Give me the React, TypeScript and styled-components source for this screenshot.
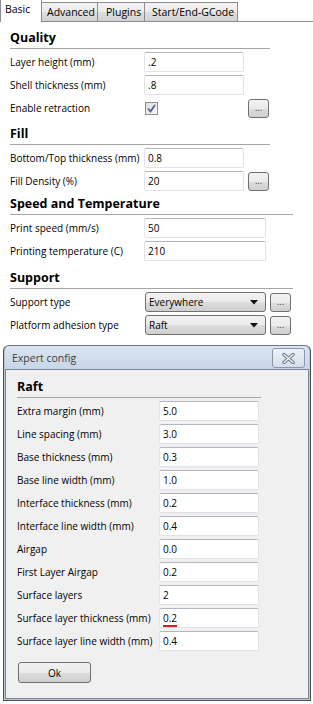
import React from "react";
import styled, { createGlobalStyle } from "styled-components";

const GlobalStyle = createGlobalStyle`
  html, body {
    margin: 0;
    padding: 0;
    background: #fff;
  }
  body {
    font-family: "Open Sans", "Noto Sans", sans-serif;
    font-size: 10px;
    color: #000;
  }
`;

const Page = styled.div`
  position: relative;
  width: 313px;
  height: 704px;
  overflow: hidden;
  background: #fff;
`;

const TabBar = styled.div`
  display: flex;
  align-items: flex-end;
  height: 22px;
  box-sizing: border-box;
  border-bottom: 1px solid #898c95;
`;

const Tab = styled.div<{ $w: number; $pl: number; $active?: boolean }>`
  box-sizing: border-box;
  width: ${(p) => p.$w}px;
  padding-left: ${(p) => p.$pl}px;
  display: flex;
  align-items: center;
  white-space: nowrap;
  font-size: 10.5px;
  border: 1px solid #898c95;
  border-left-width: ${(p) => (p.$active ? 1 : 0)}px;
  border-bottom: none;
  height: ${(p) => (p.$active ? 23 : 19)}px;
  margin-bottom: ${(p) => (p.$active ? -1 : 0)}px;
  padding-bottom: ${(p) => (p.$active ? 4 : 0)}px;
  background: ${(p) =>
    p.$active
      ? "#fff"
      : "linear-gradient(#f3f3f3 0%, #ebebeb 50%, #dedede 51%, #d2d2d2 100%)"};
  position: relative;
  z-index: ${(p) => (p.$active ? 1 : 0)};
`;

const Panel = styled.div`
  padding-left: 10px;
`;

const Section = styled.section<{ $mt: number }>`
  margin-top: ${(p) => p.$mt}px;
`;

const SectionTitle = styled.div<{ $w: number }>`
  width: ${(p) => p.$w}px;
  font-size: 12.5px;
  font-weight: bold;
  line-height: 16px;
  padding-bottom: 2px;
  border-bottom: 1px solid #a5a5a5;
  margin-bottom: 3px;
`;

const Row = styled.div`
  display: flex;
  align-items: center;
  height: 20px;
  margin-bottom: 3px;
`;

const Label = styled.div<{ $w: number }>`
  flex: none;
  width: ${(p) => p.$w}px;
  white-space: nowrap;
`;

const TextField = styled.div<{ $w: number }>`
  box-sizing: border-box;
  width: ${(p) => p.$w}px;
  height: 20px;
  padding-left: 3px;
  display: flex;
  align-items: center;
  background: #fff;
  border: 1px solid #e0e4ea;
  border-top-color: #b3b6bd;
  border-radius: 2px;
`;

const SpellError = styled.span`
  text-decoration: underline;
  text-decoration-color: #e0171c;
  text-decoration-thickness: 2px;
  text-underline-offset: 3px;
`;

const CheckSlot = styled.div<{ $w: number }>`
  width: ${(p) => p.$w}px;
  display: flex;
  align-items: center;
`;

const CheckBox = styled.div`
  box-sizing: border-box;
  width: 13px;
  height: 13px;
  margin-left: 1px;
  border: 1px solid #8e8f8f;
  background: linear-gradient(135deg, #dcdcdc, #fbfbfb);
  display: flex;
  align-items: center;
  justify-content: center;
`;

const DotsButton = styled.div`
  box-sizing: border-box;
  flex: none;
  width: 21px;
  height: 19px;
  margin-left: 4px;
  border: 1px solid #707070;
  border-radius: 3px;
  background: linear-gradient(#f2f2f2 0%, #ebebeb 50%, #dddddd 51%, #cfcfcf 100%);
  display: flex;
  align-items: center;
  justify-content: center;
  font-size: 9px;
  color: #333;
  padding-bottom: 2px;
`;

const Select = styled.div<{ $w: number }>`
  box-sizing: border-box;
  width: ${(p) => p.$w}px;
  height: 20px;
  margin-left: 1px;
  padding: 0 7px 0 3px;
  border: 1px solid #707070;
  border-radius: 3px;
  background: linear-gradient(#f2f2f2 0%, #ebebeb 50%, #dddddd 51%, #cfcfcf 100%);
  display: flex;
  align-items: center;
  justify-content: space-between;
`;

const Dialog = styled.div`
  position: absolute;
  left: 3px;
  top: 345px;
  width: 308px;
  height: 356px;
  box-sizing: border-box;
  border: 1px solid #4a4f56;
  border-top-color: #6d7786;
  border-radius: 6px 6px 0 0;
  background: #b9c6d6;
  padding: 0 1px 1px;
  display: flex;
  flex-direction: column;
`;

const TitleBar = styled.div`
  height: 23px;
  flex: none;
  display: flex;
  align-items: center;
  justify-content: space-between;
  padding: 0 4px 0 7px;
  border-radius: 5px 5px 0 0;
  background: linear-gradient(#dbe5f2, #c7d6e9);
  color: #3c3c3c;
  font-size: 10.5px;
`;

const CloseButton = styled.div`
  box-sizing: border-box;
  width: 33px;
  height: 20px;
  margin-top: 1px;
  border: 1px solid #8a97a8;
  border-radius: 3px;
  background: linear-gradient(#eef2f7, #d5deea);
  display: flex;
  align-items: center;
  justify-content: center;
`;

const DialogBody = styled.div`
  flex: 1;
  background: #f0f0f0;
  border: 1px solid #7d8693;
  padding: 9px 11px 0;
`;

const OkButton = styled.div`
  box-sizing: border-box;
  width: 73px;
  height: 21px;
  margin: 11px 0 0 1px;
  border: 1px solid #707070;
  border-radius: 3px;
  background: linear-gradient(#f2f2f2 0%, #ebebeb 50%, #dddddd 51%, #cfcfcf 100%);
  display: flex;
  align-items: center;
  justify-content: center;
`;

const CheckMark = () => (
  <svg width="9" height="9" viewBox="0 0 9 9">
    <path d="M1 4.5 L3.5 7.5 L8 1" fill="none" stroke="#4a5f97" strokeWidth="1.8" />
  </svg>
);

const Arrow = () => (
  <svg width="8" height="5" viewBox="0 0 8 5">
    <path d="M0 0 H8 L4 4.5 Z" fill="#111" />
  </svg>
);

const CloseGlyph = () => (
  <svg width="13" height="11" viewBox="0 0 13 11">
    <path d="M2 1.5 L11 9.5 M11 1.5 L2 9.5" stroke="#6a7484" strokeWidth="3.4" strokeLinecap="round" />
    <path d="M2 1.5 L11 9.5 M11 1.5 L2 9.5" stroke="#eef1f5" strokeWidth="1.6" strokeLinecap="round" />
  </svg>
);

const MAIN_LABEL = 134;
const RAFT_LABEL = 142;

const raftRows: [string, string][] = [
  ["Extra margin (mm)", "5.0"],
  ["Line spacing (mm)", "3.0"],
  ["Base thickness (mm)", "0.3"],
  ["Base line width (mm)", "1.0"],
  ["Interface thickness (mm)", "0.2"],
  ["Interface line width (mm)", "0.4"],
  ["Airgap", "0.0"],
  ["First Layer Airgap", "0.2"],
  ["Surface layers", "2"],
  ["Surface layer thickness (mm)", "0.2"],
  ["Surface layer line width (mm)", "0.4"],
];

export default function App() {
  return (
    <Page>
      <GlobalStyle />
      <TabBar>
        <Tab $w={42} $pl={4} $active>Basic</Tab>
        <Tab $w={56} $pl={5}>Advanced</Tab>
        <Tab $w={47} $pl={8}>Plugins</Tab>
        <Tab $w={93} $pl={7}>Start/End-GCode</Tab>
      </TabBar>
      <Panel>
        <Section $mt={8}>
          <SectionTitle $w={260}>Quality</SectionTitle>
          <Row>
            <Label $w={MAIN_LABEL}>Layer height (mm)</Label>
            <TextField $w={100}>.2</TextField>
          </Row>
          <Row>
            <Label $w={MAIN_LABEL}>Shell thickness (mm)</Label>
            <TextField $w={100}>.8</TextField>
          </Row>
          <Row>
            <Label $w={MAIN_LABEL}>Enable retraction</Label>
            <CheckSlot $w={100}>
              <CheckBox>
                <CheckMark />
              </CheckBox>
            </CheckSlot>
            <DotsButton>...</DotsButton>
          </Row>
        </Section>
        <Section $mt={8}>
          <SectionTitle $w={260}>Fill</SectionTitle>
          <Row>
            <Label $w={MAIN_LABEL}>Bottom/Top thickness (mm)</Label>
            <TextField $w={100}>0.8</TextField>
          </Row>
          <Row>
            <Label $w={MAIN_LABEL}>Fill Density (%)</Label>
            <TextField $w={100}>20</TextField>
            <DotsButton>...</DotsButton>
          </Row>
        </Section>
        <Section $mt={5}>
          <SectionTitle $w={283}>Speed and Temperature</SectionTitle>
          <Row>
            <Label $w={MAIN_LABEL}>Print speed (mm/s)</Label>
            <TextField $w={122}>50</TextField>
          </Row>
          <Row>
            <Label $w={MAIN_LABEL}>Printing temperature (C)</Label>
            <TextField $w={122}>210</TextField>
          </Row>
        </Section>
        <Section $mt={9}>
          <SectionTitle $w={283}>Support</SectionTitle>
          <Row>
            <Label $w={MAIN_LABEL}>Support type</Label>
            <Select $w={121}>
              <span>Everywhere</span>
              <Arrow />
            </Select>
            <DotsButton>...</DotsButton>
          </Row>
          <Row>
            <Label $w={MAIN_LABEL}>Platform adhesion type</Label>
            <Select $w={121}>
              <span>Raft</span>
              <Arrow />
            </Select>
            <DotsButton>...</DotsButton>
          </Row>
        </Section>
      </Panel>

      <Dialog>
        <TitleBar>
          <span>Expert config</span>
          <CloseButton>
            <CloseGlyph />
          </CloseButton>
        </TitleBar>
        <DialogBody>
          <SectionTitle $w={244}>Raft</SectionTitle>
          {raftRows.map(([label, value]) => (
            <Row key={label}>
              <Label $w={RAFT_LABEL}>{label}</Label>
              <TextField $w={100}>
                {label === "Surface layer thickness (mm)" ? <SpellError>{value}</SpellError> : value}
              </TextField>
            </Row>
          ))}
          <OkButton>Ok</OkButton>
        </DialogBody>
      </Dialog>
    </Page>
  );
}
